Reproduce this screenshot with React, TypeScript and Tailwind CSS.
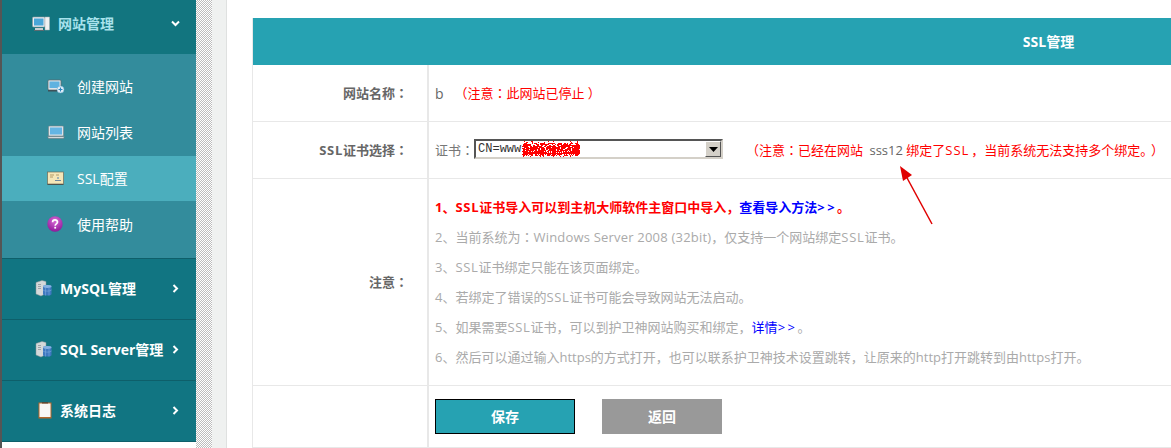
import React from "react";

function MonitorIcon() {
  return (
    <svg width="18" height="16" viewBox="0 0 18 16">
      <rect x="0.5" y="1" width="12.5" height="10" rx="1" fill="#e8eef2" stroke="#8a949c" strokeWidth="0.6" />
      <rect x="2" y="2.5" width="9.5" height="7" fill="#4aa6d8" />
      <rect x="13" y="1" width="4.5" height="13" fill="#f1f2f2" stroke="#a7adb0" strokeWidth="0.5" />
      <rect x="3" y="12" width="8" height="2" fill="#c9ced1" />
      <rect x="2" y="14" width="10" height="1" fill="#5b6a70" />
    </svg>
  );
}

function AddSiteIcon() {
  return (
    <svg width="18" height="16" viewBox="0 0 18 16">
      <rect x="1" y="2" width="13" height="10" rx="1" fill="#dfe6ea" stroke="#59666c" strokeWidth="0.7" />
      <rect x="2.5" y="3.5" width="10" height="6.5" fill="#5fb2e0" />
      <rect x="1" y="12" width="13" height="1.5" fill="#3f5158" />
      <circle cx="13.5" cy="11.5" r="3.5" fill="#e7f3fa" stroke="#6aa9cf" strokeWidth="0.6" />
      <path d="M13.5 9.5v4M11.5 11.5h4" stroke="#2b86c0" strokeWidth="1.2" />
    </svg>
  );
}

function LaptopIcon() {
  return (
    <svg width="18" height="15" viewBox="0 0 18 15">
      <rect x="1.5" y="1" width="15" height="10" rx="1" fill="#dbe3e8" stroke="#77858c" strokeWidth="0.6" />
      <rect x="3" y="2.5" width="12" height="7" fill="#64b5e4" />
      <path d="M0.5 11.5h17l-1 2h-15z" fill="#d5dadd" stroke="#5c6a70" strokeWidth="0.5" />
    </svg>
  );
}

function CertIcon() {
  return (
    <svg width="18" height="15" viewBox="0 0 18 15">
      <rect x="0.5" y="1" width="16" height="12" fill="#f5e6b8" stroke="#6f6a55" strokeWidth="0.7" />
      <rect x="0.5" y="13" width="16" height="1" fill="#4b5350" />
      <path d="M3 4h4M3 6h3M9 4h3" stroke="#b39a68" strokeWidth="1" />
      <path d="M8 9.5h6" stroke="#6f8aa0" strokeWidth="1" />
      <circle cx="11" cy="7" r="1" fill="#88a0b0" />
    </svg>
  );
}

function HelpIcon() {
  return (
    <svg width="16" height="16" viewBox="0 0 16 16">
      <defs>
        <radialGradient id="help" cx="50%" cy="30%" r="75%">
          <stop offset="0%" stopColor="#d86bd6" />
          <stop offset="100%" stopColor="#8a1296" />
        </radialGradient>
      </defs>
      <circle cx="8" cy="8" r="7.7" fill="url(#help)" />
      <path d="M5.6 6.2c0-3 4.9-3 4.9-.1 0 1.800-2.300 1.800-2.300 3.600" fill="none" stroke="#fff" strokeWidth="1.700" />
      <rect x="7.300" y="10.800" width="1.800" height="1.800" fill="#fff" />
    </svg>
  );
}

function DbIcon() {
  return (
    <svg width="17" height="18" viewBox="0 0 17 18">
      <path d="M1 3.500 7 1.500l4 1v12l-5 2.500-5-2z" fill="#d5d9da" stroke="#8f9699" strokeWidth="0.5" />
      <path d="M3 5.500h3M3 7.500h3M3 9.500h3" stroke="#8f9699" strokeWidth="0.8" />
      <path d="M8 7.500c0-2 8.500-2 8.500 0v7.500c0 2-8.500 2-8.500 0z" fill="#3f78c0" />
      <ellipse cx="12.250" cy="7.500" rx="4.250" ry="1.400" fill="#86b2e2" />
      <path d="M8 11c1.500 1.500 7 1.500 8.500 0M10.500 8.500v8M14 8.500v8" stroke="#86b2e2" strokeWidth="0.5" fill="none" />
    </svg>
  );
}

function LogIcon() {
  return (
    <svg width="14" height="17" viewBox="0 0 14 17">
      <rect x="0.500" y="0.500" width="13" height="16" fill="#b5672a" />
      <rect x="1.500" y="1.500" width="11" height="13.500" fill="#f7f7f5" />
      <rect x="4" y="0" width="6" height="1.500" fill="#5a4a3a" />
    </svg>
  );
}

function Chevron({ down }: { down?: boolean }) {
  return (
    <svg width="9" height="9" viewBox="0 0 9 9" className="shrink-0">
      <path
        d={down ? "M1 2.500 4.500 6 8 2.500" : "M2.500 1 6 4.500 2.500 8"}
        fill="none"
        stroke="#fff"
        strokeWidth="2"
      />
    </svg>
  );
}

function SubItem({ icon, label, active, h }: { icon: React.ReactNode; label: string; active?: boolean; h: string }) {
  return (
    <div className={`flex items-center pl-[45px] ${h} ${active ? "bg-[#4baebd]" : ""}`}>
      <span className="flex w-[30px] justify-start">{icon}</span>
      <span className="text-[14px] text-white">{label}</span>
    </div>
  );
}

function MenuItem({ icon, label }: { icon: React.ReactNode; label: string }) {
  return (
    <div className="flex h-[61px] items-center border-b border-[#0e5f6a] bg-[#117582] pb-[2px] pr-[16px]">
      <span className="flex w-[58px] justify-end pr-[8px]">{icon}</span>
      <span className="flex-1 text-[14px] font-bold text-white">{label}</span>
      <Chevron />
    </div>
  );
}

function Sidebar() {
  return (
    <aside className="h-full w-[196px] shrink-0 border-l-2 border-[#555555]">
      <div className="flex h-[54px] items-center bg-[#12757f] pb-[7px] pr-[16px]">
        <span className="flex w-[56px] justify-start pl-[30px]">
          <MonitorIcon />
        </span>
        <span className="flex-1 text-[14px] font-bold text-[#a8e2ec]">网站管理</span>
        <Chevron down />
      </div>
      <div className="h-[205px] border-b border-[#0e5f6a] bg-[#338c9c] pt-[10px]">
        <SubItem icon={<AddSiteIcon />} label="创建网站" h="h-[46px] pb-[2px]" />
        <SubItem icon={<LaptopIcon />} label="网站列表" h="h-[46px] pb-[2px]" />
        <SubItem icon={<CertIcon />} label="SSL配置" active h="h-[45px]" />
        <SubItem icon={<HelpIcon />} label="使用帮助" h="h-[48px] pb-[2px]" />
      </div>
      <MenuItem icon={<DbIcon />} label="MySQL管理" />
      <MenuItem icon={<DbIcon />} label="SQL Server管理" />
      <MenuItem icon={<LogIcon />} label="系统日志" />
    </aside>
  );
}

// the hand-painted red smudge over the certificate name, speckled like a spray tool
function Scribble() {
  const dots: React.ReactNode[] = [];
  let seed = 17;
  for (let x = 0; x < 58; x++) {
    for (let y = 0; y < 16; y++) {
      seed = (seed * 1103 + 12345) % 65536;
      const reach = 4 + 3 * Math.abs(Math.sin(x * 0.55));
      const dist = Math.abs(y - 8);
      const chance = dist < reach ? 0.82 : dist < reach + 2 ? 0.25 : 0;
      if (seed / 65536 < chance) dots.push(<rect key={`${x}-${y}`} x={x} y={y} width="1" height="1" fill="#ff0000" />);
    }
  }
  return (
    <svg width="58" height="16" viewBox="0 0 58 16" shapeRendering="crispEdges" className="absolute left-[46px] top-0">
      {dots}
    </svg>
  );
}

function CertSelect() {
  return (
    <div className="relative mb-[2px] flex h-[20px] w-[249px] items-center border-2 border-[#555555] border-r-[#d4d0c8] border-b-[#d4d0c8] bg-white">
      <span className="flex-1 pl-[2px] font-['Liberation_Mono',monospace] text-[12px] text-[#333333]">CN=www</span>
      <Scribble />
      <span className="flex h-[16px] w-[16px] items-center justify-center border border-[#555555] border-t-white border-l-white bg-[#d4d0c8]">
        <svg width="9" height="5" viewBox="0 0 9 5">
          <path d="M0 0h9L4.500 5z" fill="#000" />
        </svg>
      </span>
    </div>
  );
}

// full-width colon sits centred in its cell, as the TC cut draws it
function Colon() {
  return <span className="font-['Noto_Sans_CJK_TC',sans-serif]">：</span>;
}

function Ssl() {
  return <span className="tracking-[0.7px]">SSL</span>;
}

function More() {
  return <span className="tracking-[2.500px]">&gt;&gt;</span>;
}

function Row({ label, h, children }: { label?: React.ReactNode; h: string; children: React.ReactNode }) {
  return (
    <div className={`flex border-b border-[#e8e8e8] ${h}`}>
      <div className="flex w-[176px] shrink-0 items-center justify-end border-r-2 border-[#e8e8e8] pr-[19px] text-[13px] font-bold text-[#666666]">
        <span className="pt-[1px]">{label}</span>
      </div>
      <div className="flex flex-1 items-center pl-[6px]">{children}</div>
    </div>
  );
}

function Notes() {
  return (
    <div className="flex flex-col pb-[1px] text-[13px] leading-[30px] text-[#aaaaaa]">
      <p className="font-bold text-[#ff0000]">
        1、<Ssl />证书导入可以到主机大师软件主窗口中导入，<span className="text-[#0000ff]">查看导入方法<More /></span>。
      </p>
      <p>
        2、当前系统为<Colon /><span className="tracking-[0.2px]">Windows Server 2008 (32bit)</span>，仅支持一个网站绑定<Ssl />证书。
      </p>
      <p>3、<Ssl />证书绑定只能在该页面绑定。</p>
      <p>4、若绑定了错误的<Ssl />证书可能会导致网站无法启动。</p>
      <p>
        5、如果需要<Ssl />证书，可以到护卫神网站购买和绑定，<span className="text-[#0000ff]">详情<More /></span>。
      </p>
      <p>6、然后可以通过输入https的方式打开，也可以联系护卫神技术设置跳转，让原来的http打开跳转到由https打开。</p>
    </div>
  );
}

export default function App() {
  return (
    <div className="relative flex h-[448px] w-[1171px] overflow-hidden bg-white font-['Open_Sans','Noto_Sans_CJK_SC',sans-serif]">
      <Sidebar />
      <div className="h-full w-[16px] shrink-0 bg-[repeating-conic-gradient(#bdbdbd_0_25%,#ffffff_0_50%)] bg-[length:2px_2px]" />
      <div className="h-full w-[15px] shrink-0 border-r border-[#dfe1e0] bg-[#eff1f0]" />

      <main className="flex-1 overflow-hidden pl-[25px] pt-[18px]">
        <div className="w-[1592px] border-l border-[#e8e8e8]">
          <div className="flex h-[47px] items-center justify-center bg-[#26a2b2] text-[14px] font-bold text-white">
            SSL管理
          </div>
          <Row label={<>网站名称<Colon /></>} h="h-[57px]">
            <span className="text-[14px] text-[#666666]">b</span>
            <span className="ml-[11px] text-[13px] text-[#ff0000]">（注意<Colon />此网站已停止<span className="ml-[3px]">）</span></span>
          </Row>
          <Row label={<><Ssl />证书选择<Colon /></>} h="h-[57px]">
            <span className="text-[13px] text-[#777777]">证书<Colon /></span>
            <CertSelect />
            <span className="ml-[23px] whitespace-nowrap text-[13px] text-[#ff0000]">
              （注意<Colon />已经在网站 <span className="ml-[3px] text-[#666666]">sss12</span> 绑定了<span className="tracking-[1px]">SSL</span><span className="ml-[2px]">，</span>当前系统无法支持多个绑定。<span className="ml-[4px]">）</span>
            </span>
          </Row>
          <Row label={<>注意<Colon /></>} h="h-[207px]">
            <Notes />
          </Row>
          <Row h="h-[62px]">
            <button className="h-[35px] w-[140px] border border-black bg-[#26a2b2] text-[14px] font-bold text-white">
              保存
            </button>
            <button className="ml-[27px] h-[35px] w-[120px] bg-[#999999] text-[14px] font-bold text-white">
              返回
            </button>
          </Row>
        </div>
      </main>

      {/* red arrow pasted over the screenshot */}
      <svg width="40" height="66" viewBox="0 0 40 66" className="absolute left-[897px] top-[164px]">
        <path d="M35 60 9 12" stroke="#e00000" strokeWidth="1.500" fill="none" />
        <path d="M3 2 15 11 6 17z" fill="#e00000" />
      </svg>
    </div>
  );
}
